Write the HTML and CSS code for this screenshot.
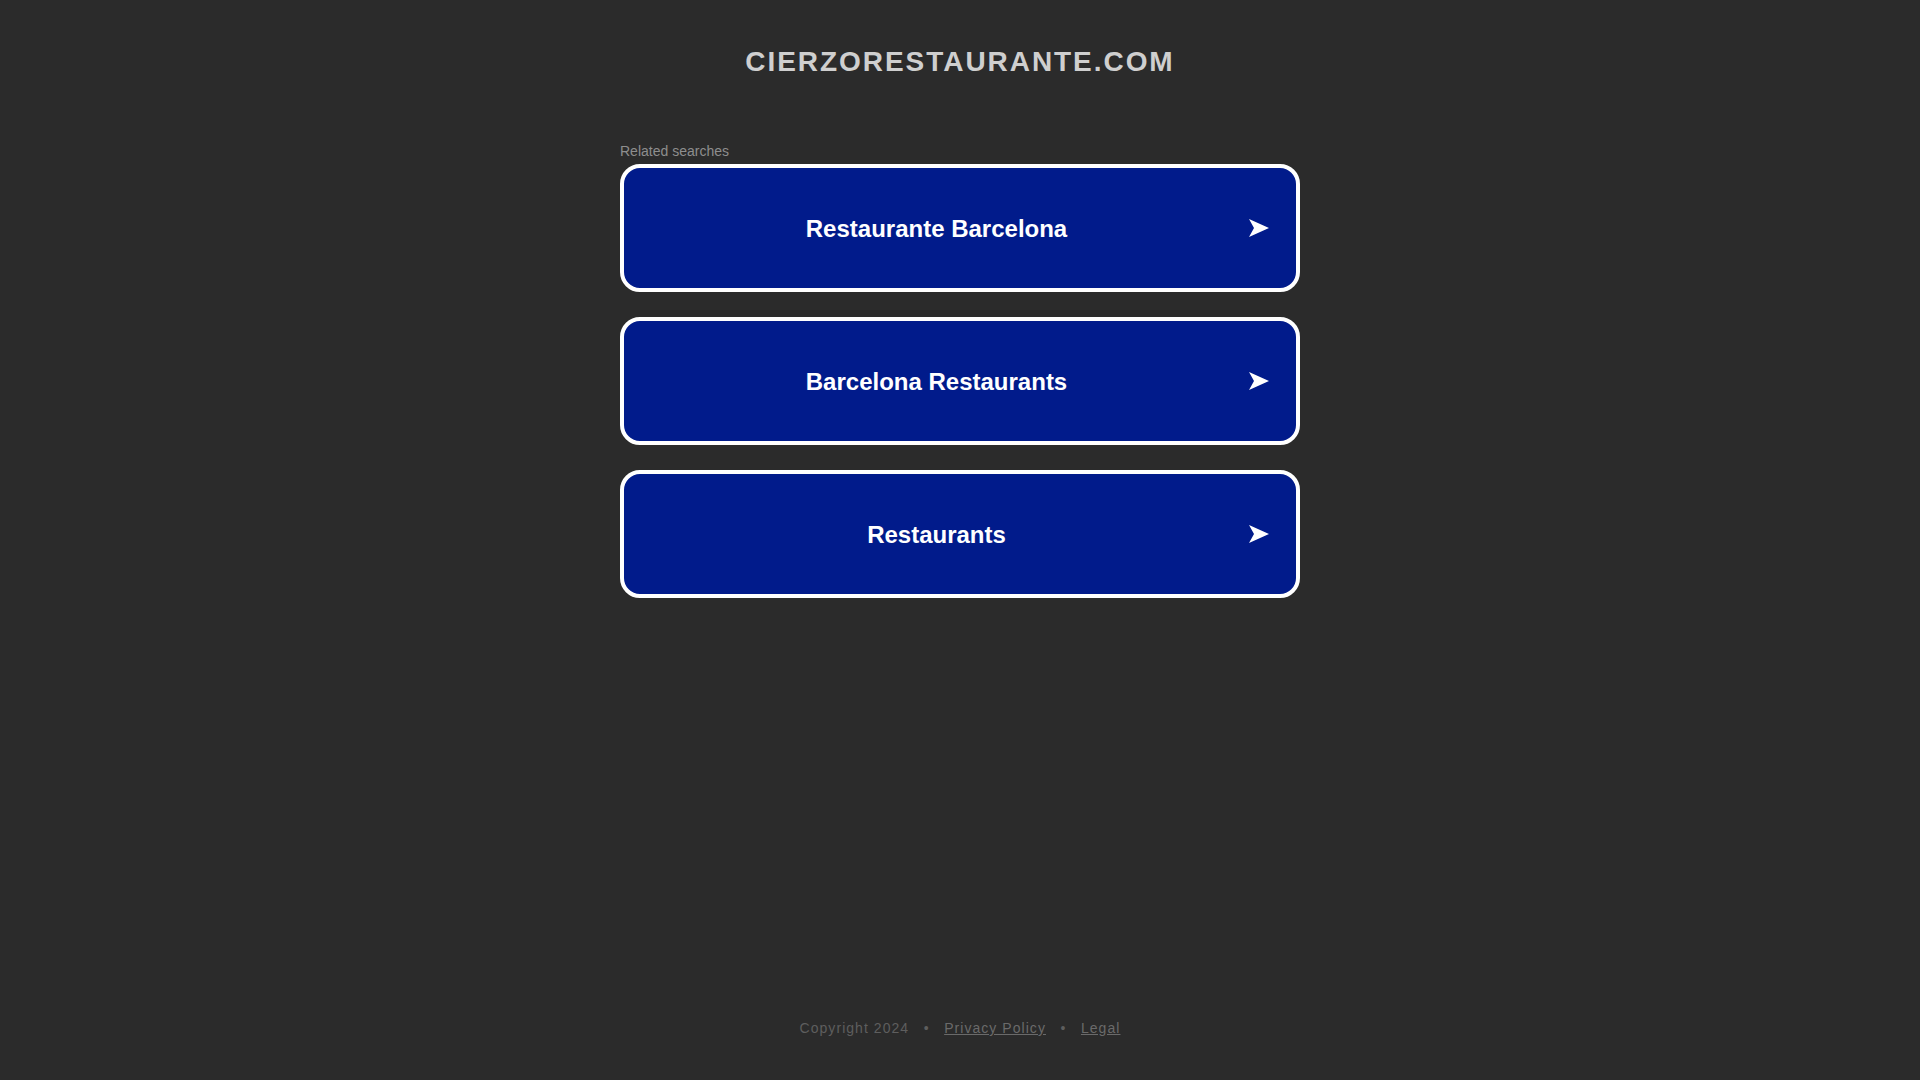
FILE: index.html
```html
<!DOCTYPE html>
<html lang="en">
<head>
<meta charset="utf-8">
<title>cierzorestaurante.com</title>
<link rel="stylesheet" href="styles.css">
</head>
<body>
<div class="page">
  <header class="header">
    <h1 class="domain">CIERZORESTAURANTE.COM</h1>
  </header>
  <main class="main">
    <div class="ads">
      <div class="ads-label">Related searches</div>
      <a class="ad" href="#">
        <span class="ad-text">Restaurante Barcelona</span>
        <svg class="ad-arrow" width="20" height="18" viewBox="0 0 20 18"><path d="M0 0 L20 9 L0 18 L5 9 Z" fill="#fff"/></svg>
      </a>
      <a class="ad" href="#">
        <span class="ad-text">Barcelona Restaurants</span>
        <svg class="ad-arrow" width="20" height="18" viewBox="0 0 20 18"><path d="M0 0 L20 9 L0 18 L5 9 Z" fill="#fff"/></svg>
      </a>
      <a class="ad" href="#">
        <span class="ad-text">Restaurants</span>
        <svg class="ad-arrow" width="20" height="18" viewBox="0 0 20 18"><path d="M0 0 L20 9 L0 18 L5 9 Z" fill="#fff"/></svg>
      </a>
    </div>
  </main>
  <footer class="footer">
    <span class="copy">Copyright 2024</span><span class="sep">•</span><a class="flink" href="#">Privacy Policy</a><span class="sep">•</span><a class="flink" href="#">Legal</a>
  </footer>
</div>
</body>
</html>
```
FILE: styles.css
```css
html, body {
  margin: 0;
  padding: 0;
  background: #2b2b2b;
}
body {
  font-family: "Liberation Sans", Arial, sans-serif;
}
.page {
  min-height: 100vh;
  display: flex;
  flex-direction: column;
}
.header {
  padding-top: 46px;
  display: flex;
  justify-content: center;
}
.domain {
  margin: 0;
  font-size: 28px;
  line-height: 32px;
  font-weight: bold;
  letter-spacing: 1.95px;
  color: #cfcfcf;
}
.main {
  display: flex;
  justify-content: center;
  padding-top: 65px;
}
.ads {
  width: 680px;
  display: flex;
  flex-direction: column;
}
.ads-label {
  font-size: 14px;
  line-height: 16px;
  color: #8e8e8e;
  margin-bottom: 5px;
}
.ad {
  display: flex;
  align-items: center;
  background: #011b8b;
  border: 4px solid #ffffff;
  border-radius: 20px;
  padding: 45.5px 27px 45.5px 0;
  margin-bottom: 25px;
  text-decoration: none;
  color: #ffffff;
}
.ad-text {
  flex: 1;
  text-align: center;
  font-size: 24px;
  line-height: 29px;
  font-weight: bold;
}
.ad-arrow {
  flex: none;
  display: block;
}
.footer {
  margin-top: auto;
  padding-bottom: 44px;
  display: flex;
  justify-content: center;
  font-size: 14px;
  line-height: 16px;
  letter-spacing: 1.05px;
  color: #5e5e5e;
}
.sep {
  margin: 0 14.5px;
}
.flink {
  color: #6a6a6a;
  text-decoration: underline;
}
```
